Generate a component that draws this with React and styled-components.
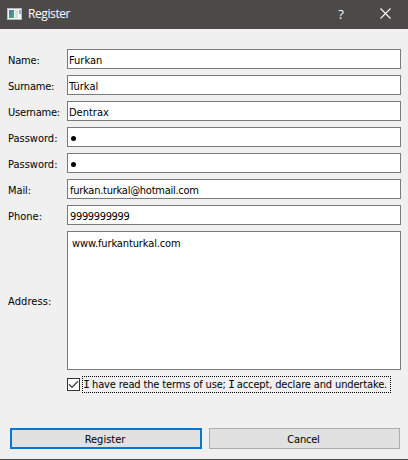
import React from "react";
import styled, { createGlobalStyle } from "styled-components";

const GlobalStyle = createGlobalStyle`
  * { box-sizing: border-box; }
  body { margin: 0; overflow: hidden; }
`;

const Dialog = styled.div`
  width: 408px;
  height: 460px;
  display: flex;
  flex-direction: column;
  background: #f0f0f0;
  border-bottom: 1px solid #4c4a48;
  color: #000;
  font: 11px/15px "DejaVu Sans Condensed", "DejaVu Sans", sans-serif;
`;

const TitleBar = styled.header`
  height: 29px;
  flex: none;
  display: flex;
  align-items: center;
  padding: 0 0 2px 7px;
  background: #4c4a48;
  color: #fff;
`;

const Title = styled.h1`
  flex: 1;
  margin: 0 0 0 6px;
  font: 400 12px/16px "Open Sans", "Noto Sans", sans-serif;
  letter-spacing: -0.4px;
`;

const TitleButton = styled.button`
  display: flex;
  align-items: center;
  justify-content: center;
  width: ${(p) => p.$width}px;
  height: 24px;
  padding: 0;
  border: 0;
  background: none;
  color: #fff;
  font: 13px/16px "Open Sans", sans-serif;
`;

const Form = styled.main`
  display: grid;
  grid-template-columns: 59px 334px;
  grid-template-rows: repeat(7, 20px) 139px 17px;
  row-gap: 6px;
  padding: 20px 0 0 8px;
`;

const Label = styled.label`
  align-self: center;
  padding-top: ${(p) => (p.$tall ? 2 : 3)}px;
  white-space: nowrap;
`;

const Text = styled.span`
  letter-spacing: ${(p) => p.$spacing || 0}px;
`;

const Field = styled.div`
  display: flex;
  align-items: center;
  padding: 3px 0 0 ${(p) => p.$inset || 1}px;
  border: 1px solid #7a7a7a;
  background: #fff;
  white-space: nowrap;
`;

const Dot = styled.span`
  width: 5px;
  height: 5px;
  margin: 0 0 1px 2px;
  border-radius: 50%;
  background: #000;
`;

const AddressField = styled(Field)`
  align-items: flex-start;
  padding: 4px 0 0 4px;
`;

const Terms = styled.div`
  grid-column: 2;
  display: flex;
  align-items: center;
  gap: 2px;
`;

const CheckBox = styled.span`
  display: flex;
  width: 13px;
  height: 13px;
  border: 1px solid #333;
  background: #fff;
`;

const TermsText = styled.span`
  width: 309px;
  height: 17px;
  padding: 0 0 0 1px;
  border: 1px dotted #000;
  white-space: nowrap;
`;

const SerifI = styled.span`
  margin-left: -0.7px;
  font-family: "DejaVu Sans Mono", monospace;
  line-height: 1;
  letter-spacing: -0.9px;
`;

const Actions = styled.footer`
  display: flex;
  gap: 7px;
  padding: 35px 8px 0 10px;
`;

const Button = styled.button`
  width: ${(p) => (p.$primary ? 192 : 191)}px;
  height: 21px;
  padding: 2px 2px 0 0;
  border: ${(p) => (p.$primary ? "2px solid #0078d7" : "1px solid #adadad")};
  background: #e1e1e1;
  color: #000;
  font: inherit;
  line-height: 15px;
`;

const rows = [
  { label: "Name:", value: "Furkan", labelSpacing: -0.2 },
  { label: "Surname:", value: "Türkal", labelSpacing: -0.2 },
  { label: "Username:", value: "Dentrax", labelSpacing: -0.2 },
  { label: "Password:", secret: true },
  { label: "Password:", secret: true },
  { label: "Mail:", value: "furkan.turkal@hotmail.com", inset: 2, spacing: -0.25, labelSpacing: -0.1 },
  { label: "Phone:", value: "9999999999", inset: 2, spacing: -0.35 },
];

function AppIcon() {
  return (
    <svg width="15" height="12" viewBox="0 0 15 12" shapeRendering="crispEdges">
      <defs>
        <linearGradient id="pane" x1="0" y1="0" x2="1" y2="1">
          <stop offset="0" stopColor="#3c7da3" />
          <stop offset="1" stopColor="#52a878" />
        </linearGradient>
      </defs>
      <rect width="15" height="12" fill="#b9bcbe" />
      <rect x="1" y="1" width="13" height="10" fill="#f4f6f7" />
      <rect x="2" y="2" width="5" height="8" fill="url(#pane)" />
      <rect x="8" y="2" width="3" height="8" fill="#dedede" />
      <rect x="12" y="2" width="2" height="4" fill="#8cb5c4" />
    </svg>
  );
}

export default function App() {
  return (
    <Dialog>
      <GlobalStyle />
      <TitleBar>
        <AppIcon />
        <Title>Register</Title>
        <TitleButton $width={44} aria-label="Help">?</TitleButton>
        <TitleButton $width={45} aria-label="Close">
          <svg width="11" height="11" viewBox="0 0 11 11">
            <path d="M.5.5l10 10M10.5.5l-10 10" stroke="#fff" strokeWidth="1.1" />
          </svg>
        </TitleButton>
      </TitleBar>
      <Form>
        {rows.map((row, i) => (
          <React.Fragment key={i}>
            <Label><Text $spacing={row.labelSpacing}>{row.label}</Text></Label>
            <Field $inset={row.inset}>
              {row.secret ? <Dot /> : <Text $spacing={row.spacing}>{row.value}</Text>}
            </Field>
          </React.Fragment>
        ))}
        <Label $tall><Text $spacing={0.08}>Address:</Text></Label>
        <AddressField><Text $spacing={-0.12}>www.furkanturkal.com</Text></AddressField>
        <Terms>
          <CheckBox>
            <svg width="11" height="11" viewBox="0 0 11 11">
              <path d="M1 5.3L4 8.3L10 2.3" fill="none" stroke="#444" strokeWidth="1.3" />
            </svg>
          </CheckBox>
          <TermsText>
            <Text $spacing={-0.14}>
              <SerifI>I</SerifI> have read the terms of use; <SerifI>I</SerifI> accept, declare and undertake.
            </Text>
          </TermsText>
        </Terms>
      </Form>
      <Actions>
        <Button $primary>Register</Button>
        <Button><Text $spacing={-0.2}>Cancel</Text></Button>
      </Actions>
    </Dialog>
  );
}
